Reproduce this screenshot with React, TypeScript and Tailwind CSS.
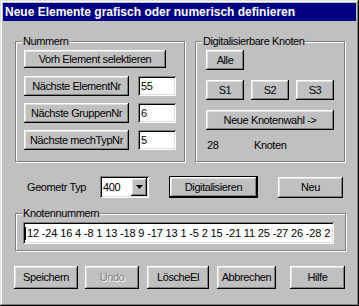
import React from 'react';

const raised =
  'bg-[#c0c0c0] shadow-[inset_-1px_-1px_#000,inset_1px_1px_#fff,inset_-2px_-2px_#808080,inset_2px_2px_#dfdfdf]';
const sunken =
  'bg-white shadow-[inset_1px_1px_#808080,inset_-1px_-1px_#fff,inset_2px_2px_#000,inset_-2px_-2px_#dfdfdf]';

const Btn: React.FC<{ label: string; className?: string; disabled?: boolean }> = ({ label, className = '', disabled }) => (
  <div className={`${raised} flex items-center justify-center shrink-0 ${className}`}>
    <span className={disabled ? 'text-[#808080] [text-shadow:1px_1px_#fff]' : 'text-black'}>{label}</span>
  </div>
);

const Group: React.FC<{ label: string; className?: string; children?: React.ReactNode }> = ({ label, className = '', children }) => (
  <div className={`relative border border-[#808080] shadow-[inset_1px_1px_#fff,1px_1px_#fff] ${className}`}>
    <span className="absolute -top-[7px] left-[6px] bg-[#c0c0c0] px-[1px] leading-[13px]">{label}</span>
    {children}
  </div>
);

const Field: React.FC<{ value: string; className?: string }> = ({ value, className = '' }) => (
  <div className={`${sunken} flex items-center pl-[3px] shrink-0 ${className}`}>{value}</div>
);

export default function App() {
  return (
    <div className="w-[359px] h-[306px] bg-[#c0c0c0] p-[3px] shadow-[inset_-1px_-1px_#000,inset_1px_1px_#dfdfdf,inset_-2px_-2px_#808080,inset_2px_2px_#fff] font-['Liberation_Sans',Arial,sans-serif] text-[11px] tracking-[-0.4px] text-black select-none">
      <div className="h-[18px] bg-[#000080] text-white font-bold text-[12px] tracking-normal flex items-center pl-[2px]">
        Neue Elemente grafisch oder numerisch definieren
      </div>

      <div className="flex gap-[10px] pl-[12px] pt-[20px]">
        <Group label="Nummern" className="w-[170px] h-[121px] pl-[8px] pt-[8px] flex flex-col gap-[7px]">
          <Btn label="Vorh Element selektieren" className="w-[142px] h-[18px] mb-[1px]" />
          {[
            ['Nächste ElementNr', '55'],
            ['Nächste GruppenNr', '6'],
            ['Nächste mechTypNr', '5'],
          ].map(([l, v]) => (
            <div key={l} className="flex items-center gap-[9px]">
              <Btn label={l} className="w-[105px] h-[20px]" />
              <Field value={v} className="w-[38px] h-[20px]" />
            </div>
          ))}
        </Group>

        <Group label="Digitalisierbare Knoten" className="w-[150px] h-[121px] pl-[10px] pt-[8px] flex flex-col gap-[10px]">
          <Btn label="Alle" className="w-[38px] h-[20px]" />
          <div className="flex gap-[7px]">
            <Btn label="S1" className="w-[38px] h-[20px]" />
            <Btn label="S2" className="w-[38px] h-[20px]" />
            <Btn label="S3" className="w-[38px] h-[20px]" />
          </div>
          <Btn label="Neue Knotenwahl ->" className="w-[128px] h-[20px]" />
          <div className="flex pl-[1px] -mt-[3px]">
            <span className="w-[47px]">28</span>
            <span>Knoten</span>
          </div>
        </Group>
      </div>

      <div className="flex items-center h-[22px] mt-[14px] pl-[24px]">
        <span className="w-[73px]">Geometr Typ</span>
        <div className={`${sunken} w-[49px] h-[22px] flex items-center justify-between pl-[3px] pr-[2px]`}>
          <span>400</span>
          <div className={`${raised} w-[16px] h-[18px] flex items-center justify-center`}>
            <svg width="7" height="4" viewBox="0 0 7 4">
              <path d="M0 0h7L3.5 4z" fill="#000" />
            </svg>
          </div>
        </div>
        <div className="ml-[21px] outline outline-1 outline-black">
          <Btn label="Digitalisieren" className="w-[87px] h-[20px]" />
        </div>
        <Btn label="Neu" className="w-[65px] h-[21px] ml-[21px]" />
      </div>

      <Group label="Knotennummern" className="ml-[12px] mt-[15px] w-[331px] h-[38px] pl-[7px] pt-[8px]">
        <div className={`${sunken} w-[311px] h-[22px] flex items-center pl-[2px] whitespace-nowrap overflow-hidden tracking-[-0.15px]`}>
          <span className="w-px h-[13px] bg-black mr-px" />
          12 -24 16 4 -8 1 13 -18 9 -17 13 1 -5 2 15 -21 11 25 -27 26 -28 2
        </div>
      </Group>

      <div className="flex items-center pl-[11px] mt-[15px]">
        <Btn label="Speichern" className="w-[64px] h-[23px]" />
        <Btn label="Undo" disabled className="w-[54px] h-[23px] ml-[7px]" />
        <Btn label="LöscheEl" className="w-[62px] h-[23px] ml-[8px]" />
        <Btn label="Abbrechen" className="w-[59px] h-[23px] ml-[8px]" />
        <Btn label="Hilfe" className="w-[55px] h-[23px] ml-[14px]" />
      </div>
    </div>
  );
}
